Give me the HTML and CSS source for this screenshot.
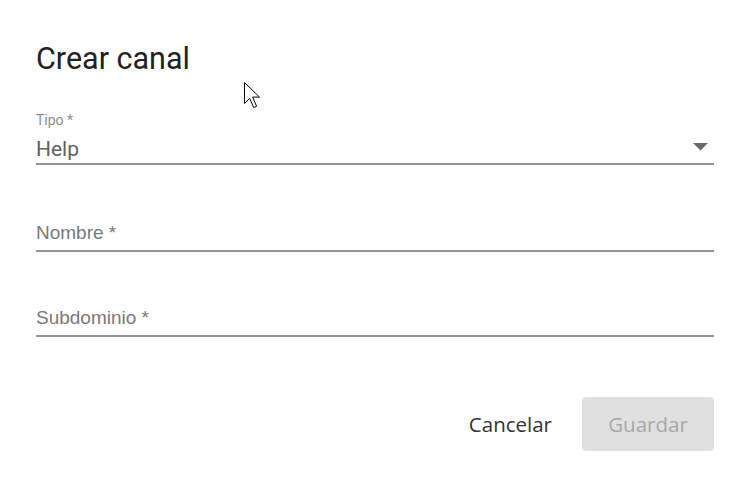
FILE: index.html
```html
<!DOCTYPE html>
<html lang="es">
<head>
    <meta charset="UTF-8">
    <meta name="viewport" content="width=device-width, initial-scale=1.0">
    <title>Crear canal</title>
    <link rel="stylesheet" href="styles.css">
</head>
<body>
    <div class="dialog">
        <h1 class="dialog-title">Crear canal</h1>

        <div class="field field-select">
            <label class="field-label">Tipo *</label>
            <div class="select-row">
                <span class="select-value">Help</span>
                <svg class="select-arrow" width="15" height="8" viewBox="0 0 15 8">
                    <polygon points="0,0 15,0 7.5,7.5" fill="#6b6b6b"/>
                </svg>
            </div>
        </div>

        <div class="field field-name">
            <div class="field-input">Nombre *</div>
        </div>

        <div class="field field-sub">
            <div class="field-input">Subdominio *</div>
        </div>

        <div class="actions">
            <button class="btn btn-text">Cancelar</button>
            <button class="btn btn-disabled" disabled>Guardar</button>
        </div>
    </div>

    <svg class="cursor" width="17" height="27" viewBox="0 0 17 27">
        <polygon points="0.5,0.5 0.5,21.5 5.7,16.4 9.7,25.6 12.6,24.3 8.6,15.1 15.5,15.1"
                 fill="#fff" stroke="#000" stroke-width="1" stroke-linejoin="miter"/>
    </svg>
</body>
</html>
```

FILE: styles.css
```css
* {
    margin: 0;
    padding: 0;
    box-sizing: border-box;
}

body {
    background: #fff;
    font-family: Roboto, "Liberation Sans", sans-serif;
}

.dialog {
    padding: 41px 34px 0 36px;
}

.dialog-title {
    font-size: 30.5px;
    line-height: 36px;
    font-weight: 400;
    color: #222;
}

.field-select {
    margin-top: 35px;
}

.field-label {
    display: block;
    font-size: 14px;
    line-height: 16px;
    color: #8e8e8e;
}

.select-row {
    display: flex;
    align-items: center;
    margin-top: 9px;
    height: 28px;
    padding-bottom: 2px;
    border-bottom: 2px solid #939393;
}

.select-value {
    flex: 1;
    font-size: 21px;
    line-height: 24px;
    color: #616161;
}

.select-arrow {
    margin: 0 6px 4px 0;
}

.field-input {
    font-family: "Liberation Sans", Arial, sans-serif;
    font-size: 19px;
    line-height: 22px;
    color: #7a7a7a;
    padding-bottom: 6px;
    border-bottom: 2px solid #939393;
}

.field-name {
    margin-top: 57px;
}

.field-sub {
    margin-top: 55px;
}

.actions {
    display: flex;
    justify-content: flex-end;
    gap: 5px;
    margin-top: 60px;
}

.btn {
    height: 54px;
    padding: 0 25px;
    border: none;
    border-radius: 4px;
    font-family: "Open Sans", sans-serif;
    font-size: 20.5px;
    line-height: 54px;
    background: transparent;
}

.btn-text {
    color: #333;
}

.btn-disabled {
    min-width: 132px;
    background: #e0e0e0;
    color: #a8a8a8;
}

.cursor {
    position: absolute;
    left: 244px;
    top: 82px;
}
```
